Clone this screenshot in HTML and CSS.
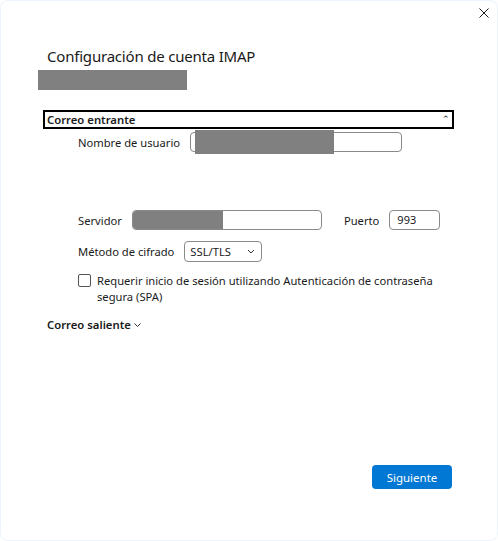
FILE: index.html
```html
<!DOCTYPE html>
<html lang="es">
<head>
    <meta charset="UTF-8">
    <meta name="viewport" content="width=device-width, initial-scale=1.0">
    <title>Configuración de cuenta IMAP</title>
    <link rel="stylesheet" href="styles.css">
</head>
<body>
    <div class="dialog">
        <div class="titlebar">
            <button class="close" aria-label="Cerrar">
                <svg width="10" height="10" viewBox="0 0 10 10">
                    <path d="M0.5 0.5 L9.5 9.5 M9.5 0.5 L0.5 9.5" stroke="#1a1a1a" stroke-width="1" fill="none"/>
                </svg>
            </button>
        </div>

        <h1 class="title">Configuración de cuenta IMAP</h1>
        <div class="account redacted"></div>

        <div class="section-head focused">
            <span>Correo entrante</span>
            <span class="caret">&#8963;</span>
        </div>

        <div class="fields">
            <div class="row">
                <label>Nombre de usuario</label>
                <div class="input user">
                    <span class="redacted fill-user"></span>
                </div>
            </div>

            <div class="row row-server">
                <label>Servidor</label>
                <div class="input server">
                    <span class="redacted fill-server"></span>
                </div>
                <label class="port-label">Puerto</label>
                <div class="input port">993</div>
            </div>

            <div class="row">
                <label>Método de cifrado</label>
                <div class="select">
                    <span>SSL/TLS</span>
                    <svg width="8" height="5" viewBox="0 0 8 5">
                        <path d="M1 1 L4 4 L7 1" stroke="#333" stroke-width="1" fill="none"/>
                    </svg>
                </div>
            </div>

            <div class="check">
                <span class="box"></span>
                <span>Requerir inicio de sesión utilizando Autenticación de contraseña segura (SPA)</span>
            </div>
        </div>

        <div class="section-head collapsed">
            <span>Correo saliente</span>
            <svg width="7" height="4" viewBox="0 0 7 4">
                <path d="M0.5 0.5 L3.5 3.5 L6.5 0.5" stroke="#333" stroke-width="1" fill="none"/>
            </svg>
        </div>

        <div class="footer">
            <button class="primary">Siguiente</button>
        </div>
    </div>
</body>
</html>
```

FILE: styles.css
```css
body {
    margin: 0;
    padding: 0;
    background: #fff;
    font-family: 'Noto Sans', sans-serif;
    color: #1a1a1a;
}

.dialog {
    width: 498px;
    height: 541px;
    box-sizing: border-box;
    display: flex;
    flex-direction: column;
    position: relative;
    border-radius: 8px;
    box-shadow: inset 0 0 0 1px #eef4fb;
}

.titlebar {
    display: flex;
    justify-content: flex-end;
    height: 26px;
    padding: 8px 9px 0 0;
}

.close {
    border: none;
    background: none;
    padding: 0;
    width: 10px;
    height: 10px;
    display: flex;
}

.title {
    font-size: 15px;
    font-weight: normal;
    margin: 12px 0 0 47px;
    line-height: 20px;
    letter-spacing: -0.2px;
}

.redacted {
    background: #808080;
    display: block;
}

.account {
    width: 149px;
    height: 20px;
    margin: 4px 0 0 38px;
}

.section-head {
    display: flex;
    align-items: center;
    font-size: 11.3px;
    font-weight: 600;
    line-height: 15px;
}

.section-head.focused {
    margin: 20px 0 0 43px;
    width: 403px;
    border: 2px solid #000;
    padding: 0 2px;
    justify-content: space-between;
}

.caret {
    font-size: 9px;
    font-weight: normal;
    line-height: 10px;
    margin-top: -2px;
}

.fields {
    padding-left: 78px;
    display: flex;
    flex-direction: column;
    font-size: 11.2px;
}

.row {
    display: flex;
    align-items: center;
    gap: 10px;
    height: 20px;
}

.row:first-child {
    margin-top: 3px;
}

.row-server {
    margin-top: 58px;
    margin-bottom: 11px;
}

.port-label {
    margin-left: 12px;
}

.input {
    box-sizing: border-box;
    height: 20px;
    border: 1px solid #8a8a8a;
    border-radius: 4px;
    position: relative;
    font-size: 11px;
    line-height: 18px;
}

.input.user {
    width: 212px;
}

.fill-user {
    position: absolute;
    left: 4px;
    top: -3px;
    width: 139px;
    height: 24px;
}

.input.server {
    width: 190px;
}

.fill-server {
    position: absolute;
    left: 0;
    top: 0;
    width: 90px;
    height: 18px;
    border-radius: 3px 0 0 3px;
}

.input.port {
    width: 51px;
    padding-left: 7px;
}

.select {
    box-sizing: border-box;
    width: 78px;
    height: 21px;
    border: 1px solid #8a8a8a;
    border-radius: 4px;
    display: flex;
    align-items: center;
    justify-content: space-between;
    padding: 0 6px 0 5px;
    font-size: 11.2px;
}

.check {
    display: flex;
    gap: 6px;
    margin-top: 12px;
    width: 375px;
    line-height: 16px;
}

.box {
    flex: none;
    width: 11px;
    height: 11px;
    border: 1px solid #555;
    border-radius: 2px;
    margin-top: 1px;
}

.section-head.collapsed {
    margin: 12px 0 0 47px;
    gap: 3px;
}

.footer {
    margin-top: auto;
    display: flex;
    justify-content: flex-end;
    padding: 0 46px 52px 0;
}

.primary {
    width: 80px;
    height: 24px;
    border: none;
    border-radius: 4px;
    background: #0078d4;
    color: #fff;
    font-family: 'Noto Sans', sans-serif;
    font-size: 11.5px;
}
```
